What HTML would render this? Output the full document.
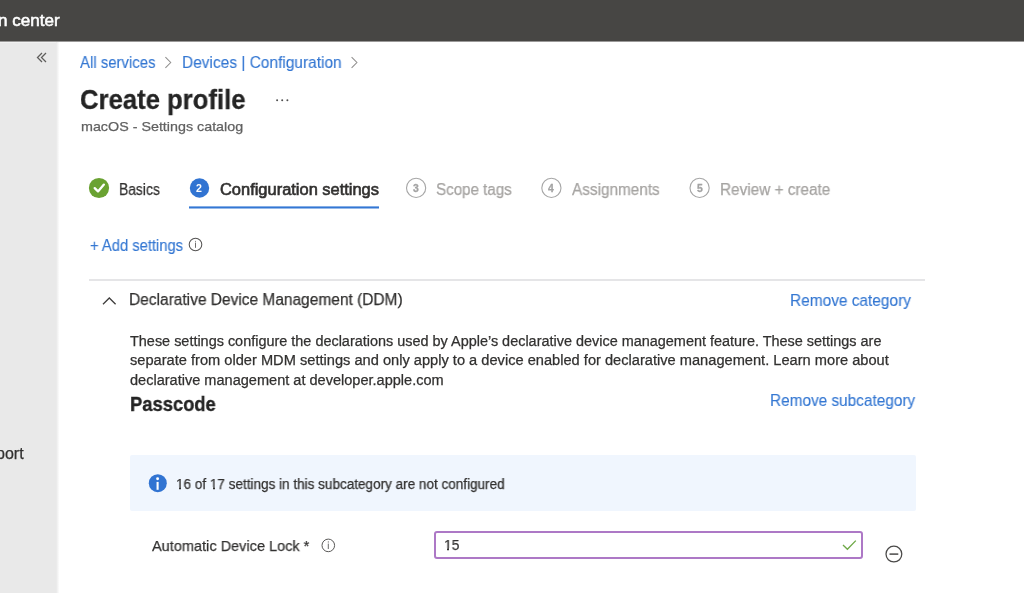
<!DOCTYPE html>
<html><head><meta charset="utf-8">
<style>
*{margin:0;padding:0;box-sizing:border-box}
html,body{width:1024px;height:593px;overflow:hidden;background:#fff;font-family:"Liberation Sans",sans-serif}
.t{position:absolute;white-space:nowrap;transform-origin:0 0;will-change:transform}
.abs{position:absolute}
#hdr{left:0;top:0;width:1024px;height:42px;background:linear-gradient(180deg,#474644 0,#474644 41px,#9a9998 41px)}
#side{left:0;top:42px;width:56px;height:551px;background:linear-gradient(180deg,#f1f1f1 0,#f1f1f1 1px,#e9e9e9 1px)}
#sideedge{left:56px;top:42px;width:3px;height:551px;background:linear-gradient(90deg,#e8e8e8,#fcfcfc)}
#uline{left:189px;top:206px;width:190px;height:2px;background:#3b7bd6}
#hline{left:89px;top:280px;width:836px;height:1px;background:#e1e1e1}
#infobar{left:130px;top:455px;width:786px;height:56px;background:#f0f6fe;border-radius:2px}
#input{left:434px;top:531px;width:429px;height:28px;border:2px solid #ad78c6;border-radius:3px;background:#fff}
</style></head><body>
<div id="hdr" class="abs"></div>
<div id="side" class="abs"></div>
<div id="sideedge" class="abs"></div>
<div id="infobar" class="abs"></div>
<div id="input" class="abs"></div>
<svg class="abs" style="left:0;top:0" width="1024" height="593" viewBox="0 0 1024 593">
  <rect x="189" y="206.4" width="190" height="2.1" fill="#3377d4"/>
  <rect x="89" y="279.3" width="836" height="1.4" fill="#dadbdd"/>
  <!-- sidebar double chevron -->
  <path d="M42,53 L37.5,57.5 L42,62 M46,53 L41.5,57.5 L46,62" fill="none" stroke="#5f5e5c" stroke-width="1.3"/>
  <!-- breadcrumb chevrons -->
  <path d="M165.4,57.2 L170.7,62.5 L165.4,67.8" fill="none" stroke="#8f8e8d" stroke-width="1.05"/>
  <path d="M351.6,57.2 L356.9,62.5 L351.6,67.8" fill="none" stroke="#8f8e8d" stroke-width="1.05"/>
  <!-- more dots -->
  <circle cx="277.1" cy="100.2" r="1" fill="#505050"/>
  <circle cx="282.2" cy="100.2" r="1" fill="#505050"/>
  <circle cx="287.4" cy="100.2" r="1" fill="#505050"/>
  <!-- tab 1 green check -->
  <circle cx="99" cy="188" r="10.1" fill="#6aa232"/>
  <path d="M94.7,188.1 L98,191.4 L103.9,184.6" fill="none" stroke="#fff" stroke-width="2.3" stroke-linecap="round" stroke-linejoin="round"/>
  <!-- tab 2 blue circle -->
  <circle cx="199.5" cy="188" r="9.7" fill="#3174d2"/>
  <!-- tab 3,4,5 outline circles -->
  <circle cx="416.1" cy="187.9" r="9.6" fill="none" stroke="#a6a6a6" stroke-width="1.1"/>
  <circle cx="551.4" cy="187.9" r="9.6" fill="none" stroke="#a6a6a6" stroke-width="1.1"/>
  <circle cx="699.6" cy="187.9" r="9.6" fill="none" stroke="#a6a6a6" stroke-width="1.1"/>
  <!-- add settings info icon -->
  <circle cx="195.5" cy="244.5" r="6.3" fill="none" stroke="#555453" stroke-width="1.05"/>
  <path d="M195.5,242.6 L195.5,247.8" stroke="#555453" stroke-width="0.85"/>
  <circle cx="195.5" cy="241.3" r="0.5" fill="#555453"/>
  <!-- section chevron up -->
  <path d="M103,304.2 L109.3,298 L115.6,304.2" fill="none" stroke="#3f3e3d" stroke-width="1.3"/>
  <!-- info filled icon -->
  <circle cx="157.8" cy="483.2" r="9" fill="#3174d2"/>
  <rect x="156.55" y="481.9" width="2.1" height="7.9" fill="#fff"/>
  <circle cx="157.6" cy="478.7" r="1.45" fill="#fff"/>
  <!-- label info icon -->
  <circle cx="328.3" cy="545.4" r="6.3" fill="none" stroke="#5a5958" stroke-width="1"/>
  <path d="M328.3,543.6 L328.3,549" stroke="#5a5958" stroke-width="0.9"/>
  <circle cx="328.3" cy="541.9" r="0.55" fill="#5a5958"/>
  <!-- green check in input -->
  <path d="M843,545 L847.4,549.2 L855.8,540.6" fill="none" stroke="#6fa948" stroke-width="1.35"/>
  <!-- minus circle -->
  <circle cx="893.9" cy="554.1" r="7.9" fill="none" stroke="#4a4948" stroke-width="1.25"/>
  <path d="M889.5,554.1 L898.3,554.1" stroke="#4a4948" stroke-width="1.5"/>
</svg>
<div id="hdrt" class="t" style="left:-2.20px;top:12.75px;font-size:16.6px;line-height:16.6px;font-weight:400;color:#ffffff;transform:scaleX(1.0288);-webkit-text-stroke:0.55px #fff">n center</div>
<div id="bc1" class="t" style="left:80.00px;top:54.03px;font-size:16.5px;line-height:16.5px;font-weight:400;color:#3477d2;transform:scaleX(0.9050);-webkit-text-stroke:0.12px #3477d2">All services</div>
<div id="bc2" class="t" style="left:181.59px;top:54.03px;font-size:16.5px;line-height:16.5px;font-weight:400;color:#3477d2;transform:scaleX(0.9376);-webkit-text-stroke:0.12px #3477d2">Devices | Configuration</div>
<div id="title" class="t" style="left:79.58px;top:86.94px;font-size:27px;line-height:27px;font-weight:700;color:#242424;transform:scaleX(0.9510);-webkit-text-stroke:0.3px #242424">Create profile</div>
<div id="sub" class="t" style="left:80.87px;top:119.77px;font-size:13.5px;line-height:13.5px;font-weight:400;color:#616161;transform:scaleX(1.0594);-webkit-text-stroke:0.25px #616161">macOS - Settings catalog</div>
<div id="tab1" class="t" style="left:118.82px;top:182.26px;font-size:16px;line-height:16px;font-weight:400;color:#323130;transform:scaleX(0.8643);-webkit-text-stroke:0.25px #323130">Basics</div>
<div id="tab2n" class="t" style="left:196.00px;top:183.23px;font-size:10.6px;line-height:10.6px;font-weight:700;color:#ffffff;transform:scaleX(1.0000);">2</div>
<div id="tab2" class="t" style="left:219.59px;top:182.26px;font-size:16px;line-height:16px;font-weight:400;color:#323130;transform:scaleX(1.0273);-webkit-text-stroke:0.62px #323130">Configuration settings</div>
<div id="tab3n" class="t" style="left:412.90px;top:184.20px;font-size:10.4px;line-height:10.4px;font-weight:700;color:#a3a3a3;transform:scaleX(1.0000);-webkit-text-stroke:0.3px #a3a3a3">3</div>
<div id="tab3" class="t" style="left:436.17px;top:182.26px;font-size:16px;line-height:16px;font-weight:400;color:#a6a4a2;transform:scaleX(0.9461);-webkit-text-stroke:0.25px #a6a4a2">Scope tags</div>
<div id="tab4n" class="t" style="left:548.30px;top:184.20px;font-size:10.4px;line-height:10.4px;font-weight:700;color:#a3a3a3;transform:scaleX(1.0000);-webkit-text-stroke:0.3px #a3a3a3">4</div>
<div id="tab4" class="t" style="left:572.00px;top:182.26px;font-size:16px;line-height:16px;font-weight:400;color:#a6a4a2;transform:scaleX(0.9578);-webkit-text-stroke:0.25px #a6a4a2">Assignments</div>
<div id="tab5n" class="t" style="left:696.50px;top:184.20px;font-size:10.4px;line-height:10.4px;font-weight:700;color:#a3a3a3;transform:scaleX(1.0000);-webkit-text-stroke:0.3px #a3a3a3">5</div>
<div id="tab5" class="t" style="left:719.66px;top:182.26px;font-size:16px;line-height:16px;font-weight:400;color:#a6a4a2;transform:scaleX(0.9576);-webkit-text-stroke:0.25px #a6a4a2">Review + create</div>
<div id="add" class="t" style="left:90.13px;top:237.59px;font-size:15.6px;line-height:15.6px;font-weight:400;color:#3477d2;transform:scaleX(0.9455);-webkit-text-stroke:0.12px #3477d2">+ Add settings</div>
<div id="sect" class="t" style="left:129.23px;top:292.06px;font-size:16px;line-height:16px;font-weight:400;color:#323130;transform:scaleX(0.9677);-webkit-text-stroke:0.25px #323130">Declarative Device Management (DDM)</div>
<div id="remcat" class="t" style="left:789.84px;top:292.29px;font-size:16.2px;line-height:16.2px;font-weight:400;color:#3477d2;transform:scaleX(0.9536);-webkit-text-stroke:0.12px #3477d2">Remove category</div>
<div id="p1" class="t" style="left:129.70px;top:333.95px;font-size:14px;line-height:14px;font-weight:400;color:#323130;transform:scaleX(1.0312);-webkit-text-stroke:0.25px #323130">These settings configure the declarations used by Apple’s declarative device management feature. These settings are</div>
<div id="p2" class="t" style="left:129.70px;top:353.45px;font-size:14px;line-height:14px;font-weight:400;color:#323130;transform:scaleX(1.0451);-webkit-text-stroke:0.25px #323130">separate from older MDM settings and only apply to a device enabled for declarative management. Learn more about</div>
<div id="p3" class="t" style="left:129.70px;top:373.15px;font-size:14px;line-height:14px;font-weight:400;color:#323130;transform:scaleX(1.0388);-webkit-text-stroke:0.25px #323130">declarative management at developer.apple.com</div>
<div id="pass" class="t" style="left:130.18px;top:395.34px;font-size:19.8px;line-height:19.8px;font-weight:700;color:#242424;transform:scaleX(0.9288);-webkit-text-stroke:0.35px #242424">Passcode</div>
<div id="remsub" class="t" style="left:770.29px;top:392.49px;font-size:16.2px;line-height:16.2px;font-weight:400;color:#3477d2;transform:scaleX(0.9491);-webkit-text-stroke:0.12px #3477d2">Remove subcategory</div>
<div id="info" class="t" style="left:176.32px;top:477.35px;font-size:14px;line-height:14px;font-weight:400;color:#323130;transform:scaleX(0.9664);-webkit-text-stroke:0.25px #323130">16 of 17 settings in this subcategory are not configured</div>
<div id="lbl" class="t" style="left:152.40px;top:538.67px;font-size:14.8px;line-height:14.8px;font-weight:400;color:#323130;transform:scaleX(0.9815);-webkit-text-stroke:0.25px #323130">Automatic Device Lock *</div>
<div id="val" class="t" style="left:444.24px;top:537.87px;font-size:14.8px;line-height:14.8px;font-weight:400;color:#323130;transform:scaleX(0.9368);-webkit-text-stroke:0.25px #323130">15</div>
<div id="port" class="t" style="left:-4.30px;top:445.76px;font-size:16px;line-height:16px;font-weight:400;color:#323130;transform:scaleX(1.0000);-webkit-text-stroke:0.25px #323130">port</div>
<div class="abs" style="left:444px;top:548px;width:3px;height:3px;background:#fff"></div>
<div class="abs" style="left:449px;top:548px;width:3px;height:3px;background:#fff"></div>
<div class="abs" style="left:176px;top:487px;width:3px;height:3px;background:#f0f6fe"></div>
<div class="abs" style="left:181px;top:487px;width:4px;height:3px;background:#f0f6fe"></div>
<div class="abs" style="left:209px;top:487px;width:4px;height:3px;background:#f0f6fe"></div>
<div class="abs" style="left:215px;top:487px;width:4px;height:3px;background:#f0f6fe"></div>
</body></html>
